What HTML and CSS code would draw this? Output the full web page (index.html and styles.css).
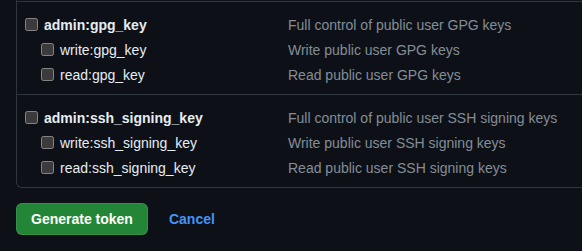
FILE: index.html
```html
<!DOCTYPE html>
<html>
<head>
    <title>New personal access token</title>
    <link rel="stylesheet" href="styles.css">
</head>
<body>
    <div class="scopes">
        <div class="scope-group">
            <label class="scope-row">
                <span class="scope-name parent"><input type="checkbox"> admin:gpg_key</span>
                <span class="scope-desc">Full control of public user GPG keys</span>
            </label>
            <label class="scope-row">
                <span class="scope-name child"><input type="checkbox"> write:gpg_key</span>
                <span class="scope-desc">Write public user GPG keys</span>
            </label>
            <label class="scope-row">
                <span class="scope-name child"><input type="checkbox"> read:gpg_key</span>
                <span class="scope-desc">Read public user GPG keys</span>
            </label>
        </div>
        <div class="scope-group">
            <label class="scope-row">
                <span class="scope-name parent"><input type="checkbox"> admin:ssh_signing_key</span>
                <span class="scope-desc">Full control of public user SSH signing keys</span>
            </label>
            <label class="scope-row">
                <span class="scope-name child"><input type="checkbox"> write:ssh_signing_key</span>
                <span class="scope-desc">Write public user SSH signing keys</span>
            </label>
            <label class="scope-row">
                <span class="scope-name child"><input type="checkbox"> read:ssh_signing_key</span>
                <span class="scope-desc">Read public user SSH signing keys</span>
            </label>
        </div>
    </div>

    <div class="form-actions">
        <button type="submit" class="btn-primary">Generate token</button>
        <a href="#" class="btn-link">Cancel</a>
    </div>
</body>
</html>
```

FILE: styles.css
```css
html {
    color-scheme: dark;
    overflow: hidden;
}
body {
    margin: 0;
    background-color: #0d1117;
    color: #e6edf3;
    font-family: "Liberation Sans", Arial, sans-serif;
    font-size: 14px;
}
.scopes {
    width: 620px;
    margin-left: 16px;
    padding-top: 1px;
    border: 1px solid #30363d;
    border-top: 0;
    border-radius: 0 0 6px 6px;
}
.scope-group {
    border-top: 1px solid #30363d;
    padding: 10px 0 7px 8px;
}
.scope-row {
    display: flex;
    height: 25px;
    align-items: center;
}
.scope-name {
    display: flex;
    align-items: center;
    width: 263px;
    flex-shrink: 0;
}
.scope-name.parent {
    font-weight: bold;
}
.scope-name.child {
    padding-left: 16px;
    width: 247px;
}
.scope-name input {
    width: 13px;
    height: 13px;
    margin: 0 6px 0 0;
}
.scope-desc {
    color: #848d97;
}
.form-actions {
    display: flex;
    align-items: center;
    margin: 15px 0 0 16px;
}
.btn-primary {
    height: 32px;
    padding: 0 14px;
    background-color: #238636;
    color: #ffffff;
    border: 1px solid rgba(240, 246, 252, 0.1);
    border-radius: 6px;
    font-family: inherit;
    font-size: 14px;
    font-weight: bold;
}
.btn-link {
    margin-left: 21px;
    color: #4493f8;
    font-weight: bold;
    text-decoration: none;
}
```
